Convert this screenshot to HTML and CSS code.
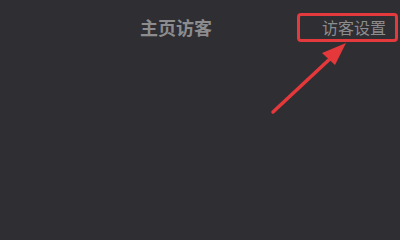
FILE: index.html
```html
<!DOCTYPE html>
<html lang="zh">
<head>
<meta charset="utf-8">
<link rel="stylesheet" href="styles.css">
</head>
<body>
<div class="screen">
  <header class="header">
    <div class="title">主页访客</div>
    <div class="settings">访客设置</div>
  </header>
  <svg class="arrow" width="400" height="240" viewBox="0 0 400 240">
    <line x1="273" y1="112" x2="333" y2="56" stroke="#e5383b" stroke-width="3.5" stroke-linecap="round"/>
    <polygon points="346,43 322,53 335,65" fill="#e5383b"/>
  </svg>
</div>
</body>
</html>
```
FILE: styles.css
```css
html, body {
  margin: 0;
  padding: 0;
  background: #2f2e33;
}
.screen {
  position: relative;
  width: 400px;
  height: 240px;
  overflow: hidden;
  font-family: "Noto Sans CJK SC", "Noto Sans", sans-serif;
}
.header {
  display: flex;
  align-items: center;
  padding: 13px 2px 0 140px;
}
.title {
  flex: 1;
  font-size: 18px;
  font-weight: bold;
  color: #8c8c8e;
  line-height: 29px;
}
.settings {
  box-sizing: border-box;
  width: 101px;
  height: 29px;
  border: 3px solid #e23a3d;
  border-radius: 4px;
  padding-left: 22px;
  font-size: 16px;
  line-height: 23px;
  color: #8c8c8e;
}
.arrow {
  position: absolute;
  left: 0;
  top: 0;
}
```
